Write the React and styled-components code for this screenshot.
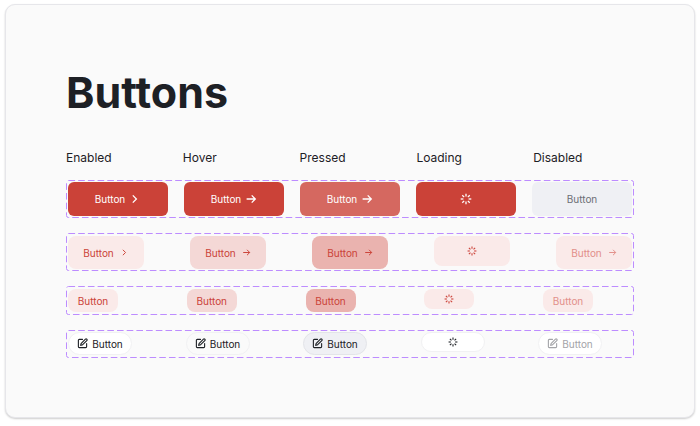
import styled, { createGlobalStyle } from "styled-components";
import { SquarePen } from "lucide-react";

const states = ["Enabled", "Hover", "Pressed", "Loading", "Disabled"];

const primary = {
  Enabled: { bg: "#cb4238", color: "#fff" },
  Hover: { bg: "#cb4238", color: "#fff" },
  Pressed: { bg: "#d56860", color: "#fff" },
  Loading: { bg: "#cb4238", color: "#fff" },
  Disabled: { bg: "#eff0f4", color: "#6c6e74" },
};

const soft = {
  Enabled: { bg: "#faeae9", color: "#cb4238" },
  Hover: { bg: "#f4d8d6", color: "#cb4238" },
  Pressed: { bg: "#eab3af", color: "#cb4238" },
  Loading: { bg: "#faeae9", color: "#cb4238" },
  Disabled: { bg: "#faeae9", color: "#e28f89" },
};

const outline = {
  Enabled: { bg: "#fff", color: "#1d2025", line: "#f1f1f3" },
  Hover: { bg: "#fafafa", color: "#1d2025", line: "#f1f1f3" },
  Pressed: { bg: "#eff0f4", color: "#1d2025", line: "#e3e4e9" },
  Loading: { bg: "#fff", color: "#1d2025", line: "#f1f1f3" },
  Disabled: { bg: "#fff", color: "#a3a4a8", line: "#f1f1f3" },
};

const Chevron = ({ size }) => (
  <Icon width={size} height={size} viewBox="0 0 12 12" aria-hidden="true">
    <path d="M3.8 2.4 L7.4 6 L3.8 9.6" />
  </Icon>
);

const Arrow = ({ size }) => (
  <Icon width={size} height={size} viewBox="0 0 12 12" aria-hidden="true">
    <path d="M1.6 6 H10.2 M6.7 2.4 L10.3 6 L6.7 9.6" />
  </Icon>
);

const Spinner = ({ size }) => (
  <Icon width={size} height={size} viewBox="0 0 12 12" aria-hidden="true">
    {[0, 45, 90, 135, 180, 225, 270, 315].map((angle) => (
      <path key={angle} d="M6 0.7 V3.4" transform={`rotate(${angle} 6 6)`} />
    ))}
  </Icon>
);

const DashedFrame = ({ children, ...props }) => (
  <Frame {...props}>
    <Dashes aria-hidden="true">
      <rect x="0.5" y="0.5" rx="2" />
    </Dashes>
    {children}
  </Frame>
);

const App = () => {
  return (
    <>
      <GlobalStyle />
      <Card>
        <Title>Buttons</Title>
        <Labels>
          {states.map((s) => (
            <span key={s}>{s}</span>
          ))}
        </Labels>
        <Rows>
          <DashedFrame $pad="2px">
            {states.map((s) => (
              <LargeButton
                key={s}
                type="button"
                disabled={s === "Disabled"}
                aria-label={s === "Loading" ? "Loading" : undefined}
                $tone={primary[s]}
              >
                {s === "Loading" ? <Spinner size={12} /> : "Button"}
                {s === "Enabled" && <Chevron size={12} />}
                {(s === "Hover" || s === "Pressed") && <Arrow size={12} />}
              </LargeButton>
            ))}
          </DashedFrame>
          <DashedFrame $pad="3px 2px 2px">
            {states.map((s) => (
              <MediumButton
                key={s}
                type="button"
                disabled={s === "Disabled"}
                aria-label={s === "Loading" ? "Loading" : undefined}
                $tone={soft[s]}
                $height={s === "Loading" ? 30 : 33}
              >
                {s === "Loading" ? <Spinner size={10} /> : "Button"}
                {s === "Enabled" && <Chevron size={9} />}
                {s !== "Enabled" && s !== "Loading" && <Arrow size={9} />}
              </MediumButton>
            ))}
          </DashedFrame>
          <DashedFrame $pad="3px 41px 3px 2px">
            {states.map((s) => (
              <SmallButton
                key={s}
                type="button"
                disabled={s === "Disabled"}
                aria-label={s === "Loading" ? "Loading" : undefined}
                $tone={soft[s]}
                $height={s === "Loading" ? 20 : 23}
              >
                {s === "Loading" ? <Spinner size={10} /> : "Button"}
              </SmallButton>
            ))}
          </DashedFrame>
          <DashedFrame $pad="2px 32px 3px 2px">
            {states.map((s) => (
              <PillButton
                key={s}
                type="button"
                disabled={s === "Disabled"}
                aria-label={s === "Loading" ? "Loading" : undefined}
                $tone={outline[s]}
                $height={s === "Loading" ? 20 : 23}
              >
                {s === "Loading" ? (
                  <Spinner size={10} />
                ) : (
                  <>
                    <SquarePen size={11} strokeWidth={2.4} aria-hidden="true" />
                    Button
                  </>
                )}
              </PillButton>
            ))}
          </DashedFrame>
        </Rows>
      </Card>
    </>
  );
};

const GlobalStyle = createGlobalStyle`
  * {
    box-sizing: border-box;
  }
  body {
    margin: 0;
    background: #fff;
    color: #1d2025;
    font-family: Inter, "Liberation Sans", sans-serif;
  }
`;

const Card = styled.main`
  margin: 4px 5px 8px;
  padding: 59px 60px 59px;
  border: 1px solid #e6e6ea;
  border-radius: 10px;
  background: #fafafa;
  box-shadow: 0 1px 2px rgba(0, 0, 0, 0.2);
`;

const Title = styled.h1`
  margin: 0;
  font-size: 43px;
  font-weight: 700;
  line-height: 56px;
`;

const Labels = styled.div`
  display: grid;
  grid-template-columns: repeat(5, 1fr);
  gap: 16px;
  margin-top: 30px;
  font-size: 12px;
  line-height: 16px;
`;

const Rows = styled.div`
  display: flex;
  flex-direction: column;
  gap: 15px;
  margin-top: 14px;
`;

const Frame = styled.div`
  position: relative;
  display: flex;
  justify-content: space-between;
  align-items: flex-start;
  padding: ${({ $pad }) => $pad};
`;

const Dashes = styled.svg`
  position: absolute;
  inset: 0;
  width: 100%;
  height: 100%;
  pointer-events: none;

  rect {
    width: calc(100% - 1px);
    height: calc(100% - 1px);
    fill: none;
    stroke: #bd8cff;
    stroke-dasharray: 6.6 3.1;
  }
`;

const Icon = styled.svg`
  flex: none;
  fill: none;
  stroke: currentColor;
  stroke-width: 1.3;
`;

const BaseButton = styled.button`
  display: flex;
  align-items: center;
  justify-content: center;
  padding: 0;
  border: none;
  background: ${({ $tone }) => $tone.bg};
  color: ${({ $tone }) => $tone.color};
  font-family: inherit;
  font-size: 10px;
  line-height: 12px;
`;

const LargeButton = styled(BaseButton)`
  gap: 4px;
  width: 100px;
  height: 34px;
  border-radius: 6px;
`;

const MediumButton = styled(BaseButton)`
  gap: 6px;
  width: 76px;
  height: ${({ $height }) => $height}px;
  border-radius: 8px;
`;

const SmallButton = styled(BaseButton)`
  width: 50px;
  height: ${({ $height }) => $height}px;
  border-radius: 8px;
`;

const PillButton = styled(BaseButton)`
  gap: 4px;
  width: 64px;
  height: ${({ $height }) => $height}px;
  border: 1px solid ${({ $tone }) => $tone.line};
  border-radius: 12px;
`;

export default App;
